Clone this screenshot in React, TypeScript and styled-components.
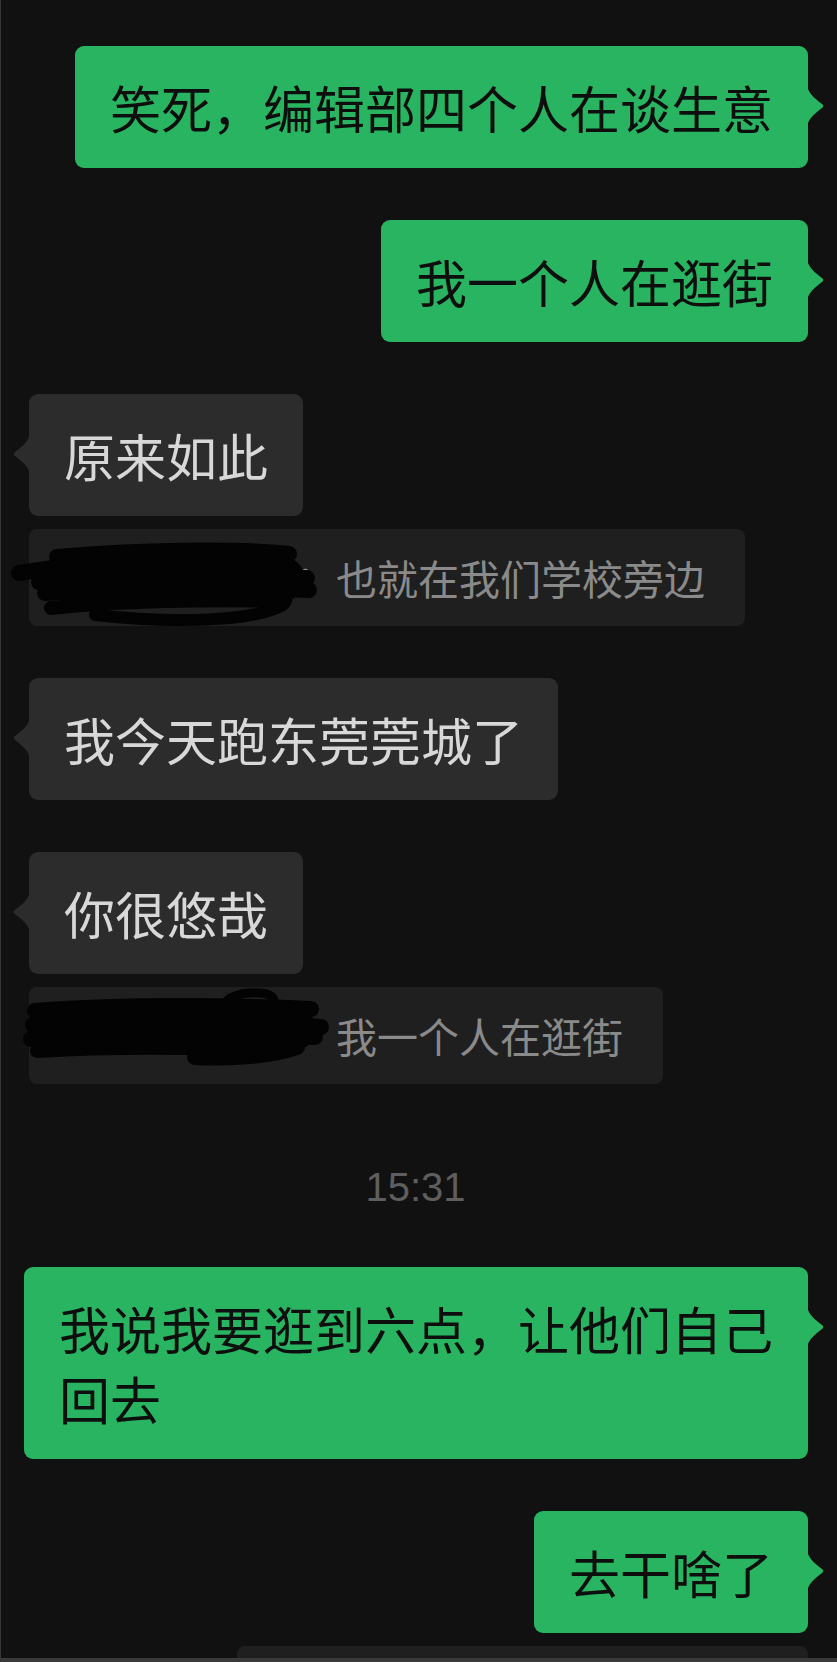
import React from 'react'
import styled, { createGlobalStyle, css } from 'styled-components'

type Side = 'left' | 'right'

interface Message {
  kind: 'bubble'
  side: Side
  lines: string[]
  quote?: { text: string; scribble: 1 | 2; colon?: boolean } | { blank: true; width: number }
}

interface Stamp {
  kind: 'time'
  text: string
}

const thread: (Message | Stamp)[] = [
  { kind: 'bubble', side: 'right', lines: ['笑死，编辑部四个人在谈生意'] },
  { kind: 'bubble', side: 'right', lines: ['我一个人在逛街'] },
  {
    kind: 'bubble',
    side: 'left',
    lines: ['原来如此'],
    quote: { text: '也就在我们学校旁边', scribble: 1, colon: true },
  },
  { kind: 'bubble', side: 'left', lines: ['我今天跑东莞莞城了'] },
  {
    kind: 'bubble',
    side: 'left',
    lines: ['你很悠哉'],
    quote: { text: '我一个人在逛街', scribble: 2 },
  },
  { kind: 'time', text: '15:31' },
  { kind: 'bubble', side: 'right', lines: ['我说我要逛到六点，让他们自己', '回去'] },
  { kind: 'bubble', side: 'right', lines: ['去干啥了'], quote: { blank: true, width: 571 } },
]

const GlobalStyle = createGlobalStyle`
  html, body {
    margin: 0;
    padding: 0;
    background: #111111;
  }
  body {
    font-family: "Noto Sans CJK SC", "Noto Sans", sans-serif;
  }
`

// black marker strokes hiding the quoted sender's name
const Scribble = ({ variant }: { variant: 1 | 2 }) => {
  if (variant === 1) {
    return (
      <Styled.Scribble width="310" height="97" viewBox="0 0 310 97">
        <g fill="none" stroke="#030303" strokeLinecap="round" strokeLinejoin="round">
          <path d="M50 50 C130 46 200 46 268 50" strokeWidth="44" />
          <path d="M42 28 C120 21 220 19 274 25" strokeWidth="16" />
          <path d="M4 44 C40 38 80 34 120 33" strokeWidth="16" />
          <path d="M24 53 C100 46 200 44 292 49" strokeWidth="16" />
          <path d="M30 64 C110 58 210 56 294 61" strokeWidth="16" />
          <path d="M36 79 C100 72 200 70 264 72" strokeWidth="14" />
          <path d="M80 86 C160 95 240 92 268 76 C276 68 270 62 250 62" strokeWidth="12" />
        </g>
      </Styled.Scribble>
    )
  }
  return (
    <Styled.Scribble width="310" height="97" viewBox="0 0 310 97">
      <g fill="none" stroke="#030303" strokeLinecap="round" strokeLinejoin="round">
        <path d="M40 42 C130 40 200 40 280 42" strokeWidth="42" />
        <path d="M20 24 C100 18 200 18 296 22" strokeWidth="16" />
        <path d="M18 38 C100 32 220 32 306 40" strokeWidth="16" />
        <path d="M16 52 C100 48 200 48 300 50" strokeWidth="16" />
        <path d="M22 64 C90 60 150 60 210 62" strokeWidth="14" />
        <path d="M205 24 C210 10 225 5 245 6 C260 7 262 14 255 22" strokeWidth="9" />
        <path d="M180 70 C220 72 260 68 282 60" strokeWidth="16" />
        <path d="M20 30 C10 40 20 44 40 42" strokeWidth="8" />
      </g>
    </Styled.Scribble>
  )
}

const Tail = ({ side }: { side: Side }) => (
  <Styled.Tail $side={side} width="17" height="34" viewBox="-1 0 17 34">
    <path d="M-1 0 L0 0 C3 7 9 11 14 15 Q16.5 17 14 19 C9 23 3 27 0 34 L-1 34 Z" />
  </Styled.Tail>
)

const Bubble = ({ msg }: { msg: Message }) => {
  const q = msg.quote
  return (
    <Styled.Group $side={msg.side}>
      <Styled.Bubble $side={msg.side}>
        {msg.lines.map((l, i) => (
          <Styled.Line key={i}>{l}</Styled.Line>
        ))}
        <Tail side={msg.side} />
      </Styled.Bubble>
      {q && 'blank' in q && <Styled.Quote style={{ width: q.width }} />}
      {q && 'text' in q && (
        <Styled.Quote>
          <Styled.Name>
            {q.colon ? '：' : ''}
            <Scribble variant={q.scribble} />
          </Styled.Name>
          <Styled.QuoteText>{q.text}</Styled.QuoteText>
        </Styled.Quote>
      )}
    </Styled.Group>
  )
}

export default function App() {
  return (
    <>
      <GlobalStyle />
      <Styled.Screen>
        <Styled.Thread>
          {thread.map((item, i) =>
            item.kind === 'time' ? (
              <Styled.Time key={i}>{item.text}</Styled.Time>
            ) : (
              <Bubble key={i} msg={item} />
            )
          )}
        </Styled.Thread>
      </Styled.Screen>
    </>
  )
}

const Styled = {
  Screen: styled.div`
  box-sizing: border-box;
  width: 837px;
  height: 1662px;
  overflow: hidden;
  background: #111111;
  border-left: 1px solid #363636;
  border-bottom: 4px solid #3a3a3a;
  `,
  Thread: styled.div`
  display: flex;
  flex-direction: column;
  gap: 52px;
  padding: 46px 29px 0 22px;
  `,
  Group: styled.div<{ $side: Side }>`
  display: flex;
  flex-direction: column;
  gap: 13px;
  align-items: ${(p) => (p.$side === 'right' ? 'flex-end' : 'flex-start')};
  padding-left: ${(p) => (p.$side === 'left' ? '6px' : '0')};
  `,
  Bubble: styled.div<{ $side: Side }>`
  position: relative;
  box-sizing: border-box;
  padding: 26px 35px;
  border-radius: 9px;
  font-size: 51px;
  line-height: 70px;
  ${(p) =>
    p.$side === 'right'
      ? css`
          background: #29b462;
          color: #0c0f0d;
          fill: #29b462;
        `
      : css`
          background: #2c2c2c;
          color: #d8d8d8;
          fill: #2c2c2c;
        `}
  `,
  Line: styled.span`
  display: block;
  white-space: nowrap;
  `,
  Tail: styled.svg<{ $side: Side }>`
  position: absolute;
  top: 43px;
  ${(p) =>
    p.$side === 'right'
      ? css`
          right: -16px;
        `
      : css`
          left: -16px;
          transform: scaleX(-1);
        `}
  `,
  Quote: styled.div`
  display: flex;
  align-items: center;
  box-sizing: border-box;
  height: 97px;
  padding: 0 40px 0 0;
  border-radius: 8px;
  background: #1f1f1f;
  `,
  Name: styled.div`
  position: relative;
  flex: none;
  width: 307px;
  height: 97px;
  font-size: 41px;
  line-height: 97px;
  color: #9a9a9a;
  text-align: right;
  `,
  Scribble: styled.svg`
  position: absolute;
  left: -14px;
  top: 0;
  overflow: visible;
  `,
  QuoteText: styled.span`
  font-size: 41px;
  line-height: 47px;
  color: #8a8a8a;
  white-space: nowrap;
  `,
  Time: styled.div`
  padding: 27px 0 4px;
  font-family: "Liberation Sans", Arial, sans-serif;
  font-size: 40px;
  line-height: 48px;
  color: #5e5e5e;
  text-align: center;
  `,
}
